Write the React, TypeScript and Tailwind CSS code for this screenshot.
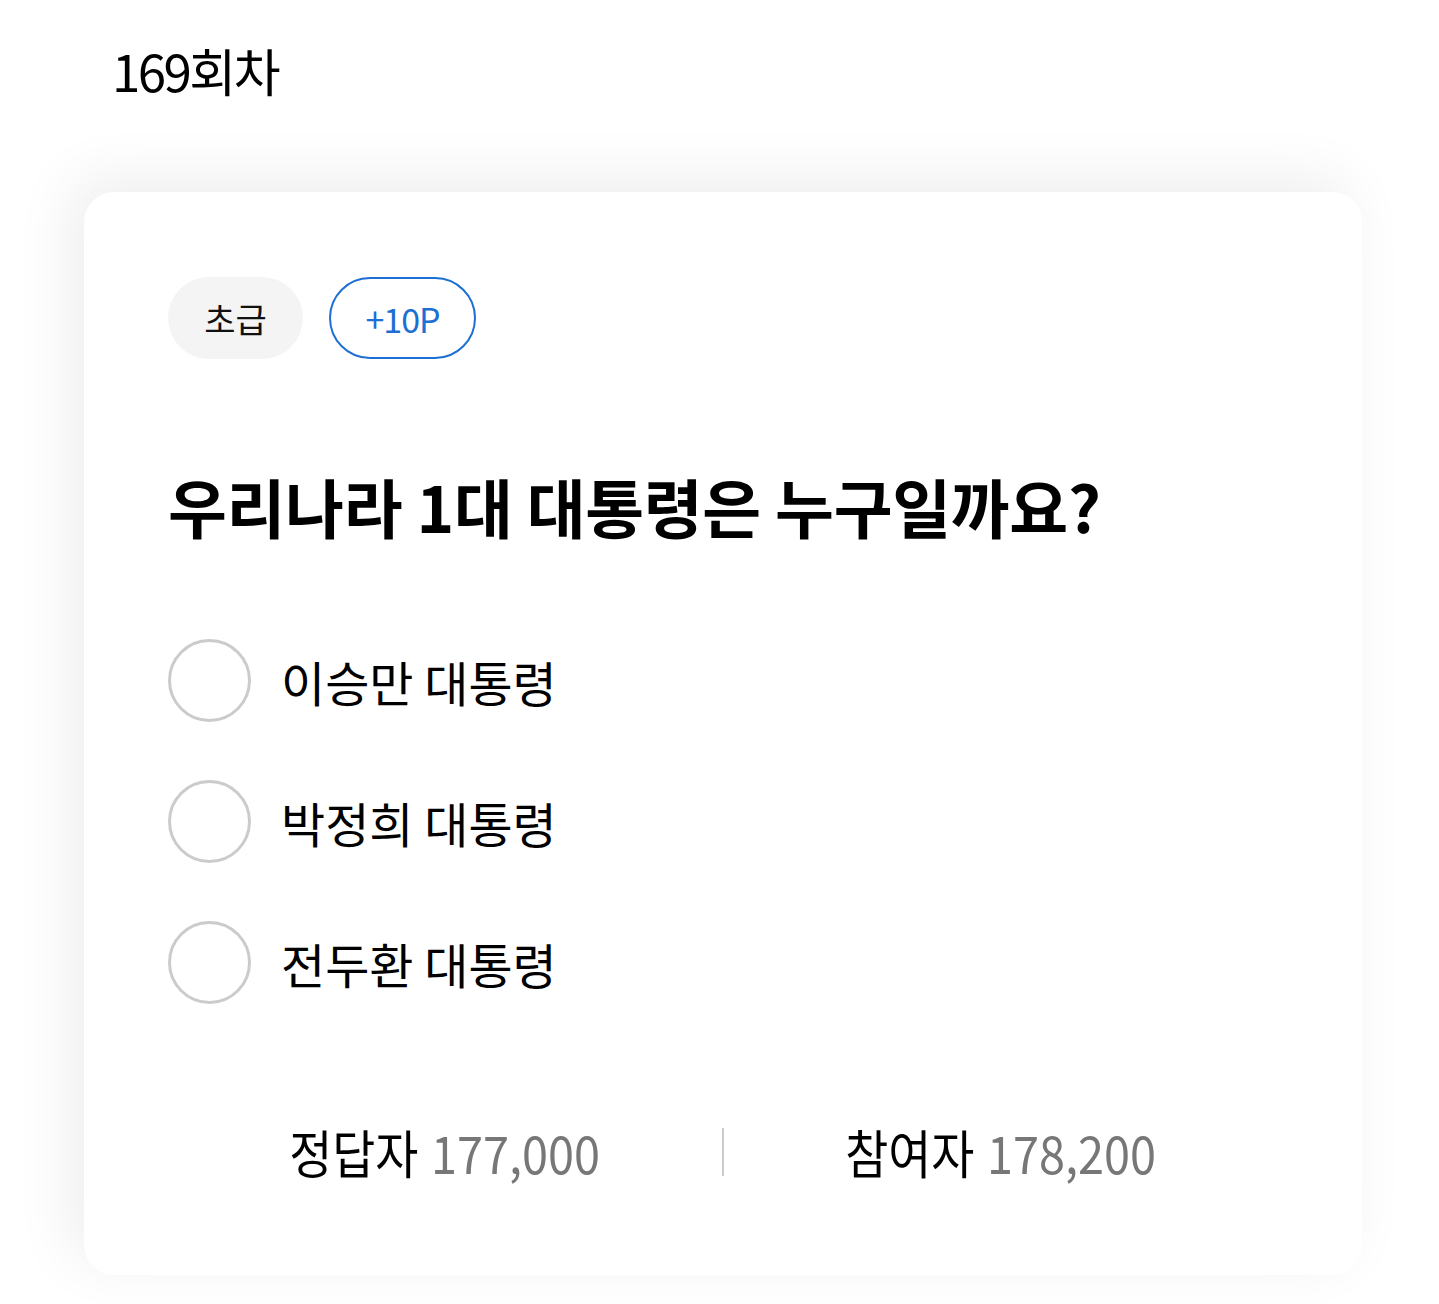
export default function App() {
  const options = ['이승만 대통령', '박정희 대통령', '전두환 대통령']

  return (
    <div className="min-h-screen bg-white pl-[84px] pr-[77px] pt-[34px] font-['Noto_Sans_CJK_KR',sans-serif] text-black">
      <h1 className="ml-[28px] text-[51px] leading-[72px] font-normal tracking-[-0.05em]">169회차</h1>

      <div className="mt-[86px] rounded-[30px] bg-white px-[84px] pt-[85px] pb-[93px] shadow-[-14px_-14px_60px_rgba(0,0,0,0.07)]">
        {/* badges */}
        <div className="flex items-center gap-[26px]">
          <span className="flex h-[82px] w-[135px] items-center justify-center rounded-full bg-[#f4f4f4] text-[34px] text-[#111]">
            초급
          </span>
          <span className="flex h-[82px] w-[147px] items-center justify-center rounded-full border-2 border-[#1d6fd3] text-[34px] text-[#1d6fd3] tracking-[-0.03em]">
            +10P
          </span>
        </div>

        <h2 className="mt-[104px] text-[64px] leading-[84px] font-bold tracking-[-0.005em]">
          우리나라 1대 대통령은 누구일까요?
        </h2>

        {/* options */}
        <div className="mt-[92px] flex flex-col gap-[58px]">
          {options.map(o => (
            <label key={o} className="flex items-center gap-[30px]">
              <span className="h-[83px] w-[83px] shrink-0 rounded-full border-[3px] border-[#cbcbcb] bg-white" />
              <span className="text-[48px] leading-[64px]">{o}</span>
            </label>
          ))}
        </div>

        {/* stats */}
        <div className="mt-[118px] flex items-center">
          <div className="flex flex-1 justify-center">
            <div className="flex scale-x-90 text-[52px] leading-[60px]">
              <span>정답자</span>
              <span className="ml-[14px] text-[#777]">177,000</span>
            </div>
          </div>
          <div className="h-[48px] w-[2px] bg-[#cccccc]" />
          <div className="flex flex-1 justify-center">
            <div className="flex scale-x-90 text-[52px] leading-[60px]">
              <span>참여자</span>
              <span className="ml-[14px] text-[#777]">178,200</span>
            </div>
          </div>
        </div>
      </div>
    </div>
  )
}
